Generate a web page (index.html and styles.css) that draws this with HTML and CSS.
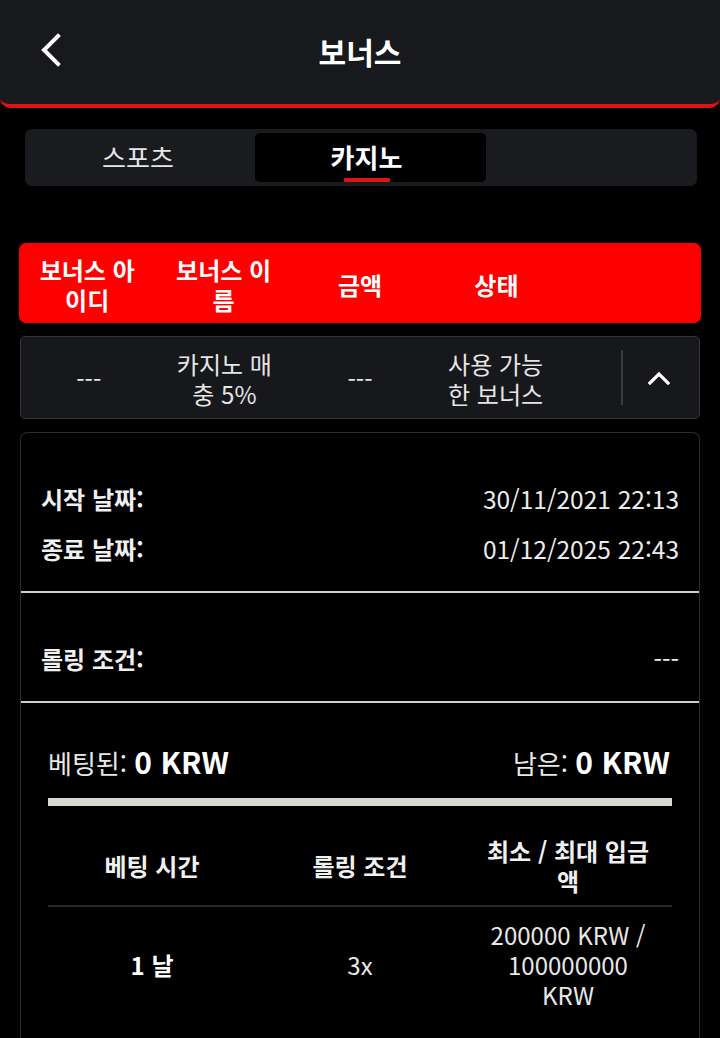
FILE: index.html
```html
<!DOCTYPE html>
<html lang="ko">
<head>
<meta charset="utf-8">
<title>보너스</title>
<link rel="stylesheet" href="styles.css">
</head>
<body>
<header class="topbar">
  <button class="back" aria-label="뒤로">
    <svg width="24" height="36" viewBox="0 0 24 36"><path d="M18 4 L4 18 L18 32" fill="none" stroke="#fff" stroke-width="4" stroke-linecap="square" stroke-linejoin="miter"/></svg>
  </button>
  <h1 class="title">보너스</h1>
</header>

<nav class="tabs">
  <div class="tab">스포츠</div>
  <div class="tab active">카지노</div>
  <div class="tab"></div>
</nav>

<section class="bonus">
  <div class="thead">
    <div class="cell">보너스 아이디</div>
    <div class="cell">보너스 이름</div>
    <div class="cell">금액</div>
    <div class="cell">상태</div>
    <div class="cell"></div>
  </div>

  <div class="trow">
    <div class="cell">---</div>
    <div class="cell">카지노 매충 5%</div>
    <div class="cell">---</div>
    <div class="cell">사용 가능한 보너스</div>
    <div class="toggle">
      <svg width="24" height="14" viewBox="0 0 24 14"><path d="M3 12 L12 3 L21 12" fill="none" stroke="#fff" stroke-width="3.2" stroke-linecap="square"/></svg>
    </div>
  </div>

  <div class="detail">
    <div class="sect">
      <div class="kv"><span class="k">시작 날짜:</span><span class="v">30/11/2021 22:13</span></div>
      <div class="kv"><span class="k">종료 날짜:</span><span class="v">01/12/2025 22:43</span></div>
    </div>
    <div class="sect">
      <div class="kv"><span class="k">롤링 조건:</span><span class="v">---</span></div>
    </div>
    <div class="wager">
      <div class="betline">
        <span class="bl">베팅된: <b>0 KRW</b></span>
        <span class="bl">남은: <b>0 KRW</b></span>
      </div>
      <div class="bar"><div class="fill" style="width:100%"></div></div>
      <div class="rtable">
        <div class="rhead">
          <div class="rc">베팅 시간</div>
          <div class="rc">롤링 조건</div>
          <div class="rc">최소 / 최대 입금액</div>
        </div>
        <div class="rbody">
          <div class="rc strong">1 날</div>
          <div class="rc">3x</div>
          <div class="rc">200000 KRW / 100000000 KRW</div>
        </div>
      </div>
    </div>
  </div>
</section>
</body>
</html>
```
FILE: styles.css
```css
* { box-sizing: border-box; }
html, body { margin: 0; padding: 0; }
body {
  background: #000;
  color: #f2f2f2;
  font-family: "Noto Sans CJK KR", "Noto Sans", sans-serif;
  width: 720px;
  height: 1038px;
  overflow: hidden;
}

.topbar {
  height: 108px;
  background: #18191d;
  border-bottom: 4px solid #d81414;
  border-radius: 0 0 10px 10px;
  display: flex;
  align-items: center;
  justify-content: center;
  position: relative;
}
.back {
  position: absolute;
  left: 40px;
  top: 32px;
  background: none;
  border: 0;
  padding: 0;
  width: 24px;
  height: 36px;
}
.back svg { display: block; }
.title {
  margin: 0;
  font-size: 30px;
  font-weight: 700;
  color: #fff;
  line-height: 1;
  padding-bottom: 2px;
}

.tabs {
  margin: 21px 23px 0 25px;
  height: 57px;
  background: #1a1b1f;
  border-radius: 7px;
  padding: 4px;
  display: grid;
  grid-template-columns: 226px 231px 1fr;
}
.tab {
  display: flex;
  align-items: center;
  justify-content: center;
  font-size: 26px;
  color: #e6e6e6;
  border-radius: 5px;
  position: relative;
  padding-bottom: 2px;
}
.tab:first-child { padding-right: 8px; }
.tab.active {
  background: #000;
  color: #fff;
  font-weight: 700;
  padding-right: 8px;
}
.tab.active::after {
  content: "";
  position: absolute;
  left: 89px;
  bottom: 0;
  width: 46px;
  height: 4px;
  background: #e01414;
  border-radius: 1px;
}

.bonus { padding: 57px 19px 0; }

.thead {
  height: 80px;
  background: #ff0000;
  border-radius: 7px;
  display: grid;
  grid-template-columns: repeat(5, 1fr);
  align-items: center;
}
.cell {
  text-align: center;
  padding: 0 15px;
  font-size: 24px;
  line-height: 30px;
}
.thead .cell {
  font-weight: 700;
  color: #fff;
  padding-top: 3px;
}

.trow {
  margin: 13px 1px 0;
  height: 83px;
  background: #17181c;
  border: 1px solid #34353a;
  border-radius: 5px;
  display: grid;
  grid-template-columns: repeat(5, 1fr);
  align-items: center;
}
.trow .cell { color: #e6e6e6; padding-top: 2px; }
.toggle {
  justify-self: end;
  width: 77px;
  height: 55px;
  margin-right: 1px;
  border-left: 2px solid #3a3b40;
  display: flex;
  align-items: center;
  justify-content: center;
  background: #17181c;
}
.toggle svg { display: block; margin-left: -4px; }

.detail {
  margin: 13px 1px 0;
  border: 1px solid #2a2b30;
  border-bottom: 0;
  border-radius: 7px 7px 0 0;
  background: #000;
  min-height: 620px;
}
.sect {
  padding: 40px 20px 18px;
  border-bottom: 2px solid #cfcfcf;
}
.kv {
  height: 50px;
  display: flex;
  justify-content: space-between;
  align-items: center;
}
.k {
  font-size: 24px;
  font-weight: 700;
  color: #f0f0f0;
}
.v {
  font-size: 24.5px;
  color: #ececec;
}

.wager { padding: 37px 27px 0; }
.betline {
  height: 42px;
  display: flex;
  justify-content: space-between;
  align-items: center;
  padding-right: 2px;
}
.bl {
  font-size: 26px;
  color: #e8e8e8;
}
.bl b {
  font-size: 30px;
  font-weight: 700;
  color: #fff;
}
.bar {
  margin-top: 16px;
  height: 8px;
  background: #2a2b30;
}
.fill {
  height: 100%;
  background: #d9d9d1;
}

.rtable { margin-top: 30px; }
.rhead, .rbody {
  display: grid;
  grid-template-columns: repeat(3, 1fr);
  align-items: center;
}
.rhead {
  padding-bottom: 9px;
  border-bottom: 2px solid #26272c;
}
.rbody { padding-top: 13px; }
.rc {
  text-align: center;
  font-size: 24px;
  line-height: 30px;
  padding: 0 21px;
  color: #e8e8e8;
}
.rhead .rc { font-weight: 700; color: #f0f0f0; }
.rc.strong { font-weight: 700; color: #fff; }
```
